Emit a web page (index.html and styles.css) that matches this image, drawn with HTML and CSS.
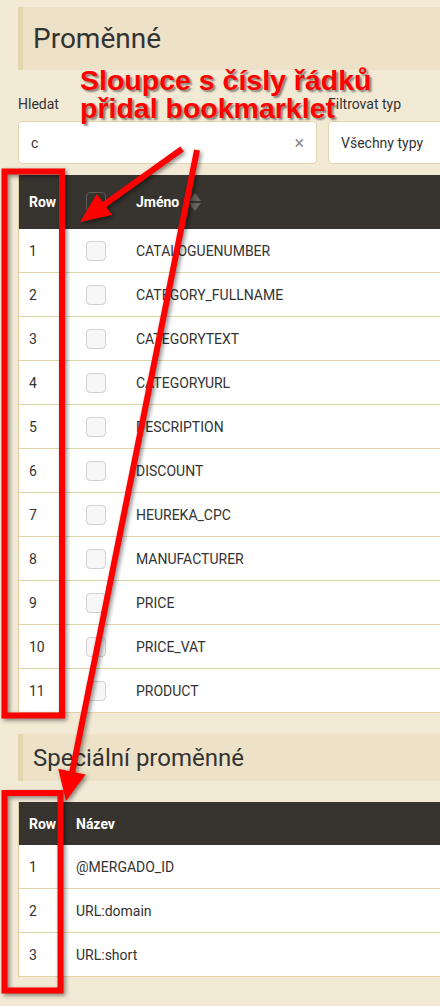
FILE: index.html
```html
<!DOCTYPE html>
<html lang="cs">
<head>
  <meta charset="UTF-8">
  <title>Proměnné</title>
  <link rel="stylesheet" href="styles.css">
</head>
<body>

<div class="page">

  <!-- Proměnné -->
  <div class="panel">
    <h1>Proměnné</h1>
  </div>

  <div class="filters">
    <div class="field search">
      <label>Hledat</label>
      <div class="input">
        <span>c</span>
        <span class="clear">×</span>
      </div>
    </div>
    <div class="field type">
      <label>Filtrovat typ</label>
      <div class="input">
        <span>Všechny typy</span>
      </div>
    </div>
  </div>

  <div class="grid vars">
    <div class="row head">
      <div class="cell num">Row</div>
      <div class="cell check"><span class="box dark"></span></div>
      <div class="cell name">Jméno <span class="sort"><i class="up"></i><i class="down"></i></span></div>
    </div>
    <div class="row"><div class="cell num">1</div><div class="cell check"><span class="box"></span></div><div class="cell name">CATALOGUENUMBER</div></div>
    <div class="row"><div class="cell num">2</div><div class="cell check"><span class="box"></span></div><div class="cell name">CATEGORY_FULLNAME</div></div>
    <div class="row"><div class="cell num">3</div><div class="cell check"><span class="box"></span></div><div class="cell name">CATEGORYTEXT</div></div>
    <div class="row"><div class="cell num">4</div><div class="cell check"><span class="box"></span></div><div class="cell name">CATEGORYURL</div></div>
    <div class="row"><div class="cell num">5</div><div class="cell check"><span class="box"></span></div><div class="cell name">DESCRIPTION</div></div>
    <div class="row"><div class="cell num">6</div><div class="cell check"><span class="box"></span></div><div class="cell name">DISCOUNT</div></div>
    <div class="row"><div class="cell num">7</div><div class="cell check"><span class="box"></span></div><div class="cell name">HEUREKA_CPC</div></div>
    <div class="row"><div class="cell num">8</div><div class="cell check"><span class="box"></span></div><div class="cell name">MANUFACTURER</div></div>
    <div class="row"><div class="cell num">9</div><div class="cell check"><span class="box"></span></div><div class="cell name">PRICE</div></div>
    <div class="row"><div class="cell num">10</div><div class="cell check"><span class="box"></span></div><div class="cell name">PRICE_VAT</div></div>
    <div class="row"><div class="cell num">11</div><div class="cell check"><span class="box"></span></div><div class="cell name">PRODUCT</div></div>
  </div>

  <!-- Speciální proměnné -->
  <div class="panel small">
    <h1>Speciální proměnné</h1>
  </div>

  <div class="grid special">
    <div class="row head">
      <div class="cell num">Row</div>
      <div class="cell name">Název</div>
    </div>
    <div class="row"><div class="cell num">1</div><div class="cell name">@MERGADO_ID</div></div>
    <div class="row"><div class="cell num">2</div><div class="cell name">URL:domain</div></div>
    <div class="row"><div class="cell num">3</div><div class="cell name">URL:short</div></div>
  </div>

  <!-- annotation drawn over the page -->
  <div class="note">Sloupce s čísly řádků<br>přidal bookmarklet</div>

  <svg class="marks" width="440" height="1006" viewBox="0 0 440 1006">
    <g fill="none" stroke="#ff0000" stroke-width="6">
      <rect x="4.5" y="171.5" width="57.5" height="544"/>
      <rect x="4.5" y="793" width="56" height="197.5"/>
      <line x1="182" y1="149" x2="101" y2="207"/>
      <line x1="197" y1="150" x2="72" y2="773"/>
    </g>
    <g fill="#ff0000">
      <polygon points="80,222 96.9,193.9 112.1,215.1"/>
      <polygon points="66,801 58.2,768.8 85.6,774.4"/>
    </g>
  </svg>

</div>

</body>
</html>
```

FILE: styles.css
```css
* {
  box-sizing: border-box;
}

html, body {
  margin: 0;
  padding: 0;
  background: #f3ead5;
  font-family: Roboto, 'Liberation Sans', sans-serif;
  color: #333;
  overflow: hidden;
}

.page {
  position: relative;
  width: 700px;
  padding: 7px 0 30px 18px;
}

.panel {
  height: 63px;
  background: #ede2c7;
  border-left: 5px solid #e3d6b1;
  padding-left: 10px;
  display: flex;
  align-items: center;
}

.panel h1 {
  margin: 0;
  font-size: 28px;
  font-weight: 400;
  color: #333;
}

.panel.small {
  height: 47px;
  margin-top: 21px;
}

.panel.small h1 {
  font-size: 24px;
}

.filters {
  display: flex;
  gap: 11px;
  margin-top: 24px;
}

.field label {
  display: block;
  font-size: 14px;
  line-height: 20px;
  margin-bottom: 7px;
  color: #333;
}

.search {
  width: 299px;
}

.type {
  width: 200px;
}

.input {
  height: 43px;
  background: #fff;
  border: 1px solid #e2d5ae;
  border-radius: 4px;
  padding: 0 12px;
  display: flex;
  align-items: center;
  justify-content: space-between;
  font-size: 14px;
  color: #333;
}

.clear {
  color: #8d8d8d;
  font-size: 18px;
  margin-right: 0;
}

.grid {
  margin-top: 11px;
  background: #fff;
  border-left: 1px solid #dccb9f;
}

.special {
  margin-top: 21px;
}

.row {
  display: flex;
  align-items: center;
  height: 44px;
  border-bottom: 1px solid #e2d3a8;
  font-size: 14px;
}

.row.head {
  height: 54px;
  background: #37342f;
  color: #fff;
  font-weight: 700;
  border-bottom: none;
}

.special .row.head {
  height: 43px;
}

.cell {
  padding-left: 10px;
}

.vars .num {
  width: 57px;
}

.special .num {
  width: 47px;
}

.check {
  width: 50px;
  display: flex;
  align-items: center;
}

.box {
  width: 20px;
  height: 20px;
  border-radius: 4px;
  background: #f6f6f6;
  border: 1px solid #d2d2d2;
}

.box.dark {
  background: #37342f;
  border-color: #5d5a55;
}

.name {
  display: flex;
  align-items: center;
}

.sort {
  display: inline-flex;
  flex-direction: column;
  gap: 2px;
  margin-left: 10px;
}

.sort i {
  width: 0;
  height: 0;
  border-left: 6px solid transparent;
  border-right: 6px solid transparent;
}

.sort .up {
  border-bottom: 8px solid #67645f;
}

.sort .down {
  border-top: 8px solid #67645f;
}

.note {
  position: absolute;
  left: 80px;
  top: 66px;
  font-family: 'Liberation Sans', Arial, sans-serif;
  font-weight: 700;
  font-size: 28.5px;
  line-height: 28px;
  color: #ff0000;
  text-shadow: 2px 2px 2px rgba(0, 0, 0, 0.45);
  white-space: nowrap;
}

.marks {
  position: absolute;
  left: 0;
  top: 0;
  pointer-events: none;
  filter: drop-shadow(2px 2px 2px rgba(0, 0, 0, 0.45));
}
```
